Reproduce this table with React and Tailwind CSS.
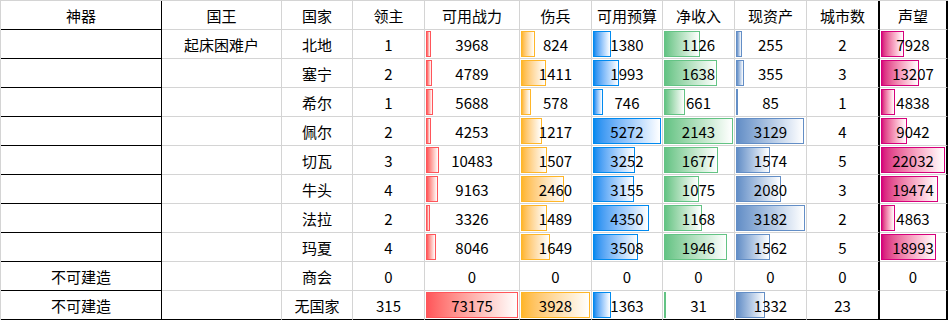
import React from 'react';

const rows = [
    { art: '', king: '起床困难户', nation: '北地', lords: 1, power: 3968, wounded: 824, budget: 1380, income: 1126, assets: 255, cities: 2, fame: 7928 },
    { art: '', king: '', nation: '塞宁', lords: 2, power: 4789, wounded: 1411, budget: 1993, income: 1638, assets: 355, cities: 3, fame: 13207 },
    { art: '', king: '', nation: '希尔', lords: 1, power: 5688, wounded: 578, budget: 746, income: 661, assets: 85, cities: 1, fame: 4838 },
    { art: '', king: '', nation: '佩尔', lords: 2, power: 4253, wounded: 1217, budget: 5272, income: 2143, assets: 3129, cities: 4, fame: 9042 },
    { art: '', king: '', nation: '切瓦', lords: 3, power: 10483, wounded: 1507, budget: 3252, income: 1677, assets: 1574, cities: 5, fame: 22032 },
    { art: '', king: '', nation: '牛头', lords: 4, power: 9163, wounded: 2460, budget: 3155, income: 1075, assets: 2080, cities: 3, fame: 19474 },
    { art: '', king: '', nation: '法拉', lords: 2, power: 3326, wounded: 1489, budget: 4350, income: 1168, assets: 3182, cities: 2, fame: 4863 },
    { art: '', king: '', nation: '玛夏', lords: 4, power: 8046, wounded: 1649, budget: 3508, income: 1946, assets: 1562, cities: 5, fame: 18993 },
    { art: '不可建造', king: '', nation: '商会', lords: 0, power: 0, wounded: 0, budget: 0, income: 0, assets: 0, cities: 0, fame: 0 },
    { art: '不可建造', king: '', nation: '无国家', lords: 315, power: 73175, wounded: 3928, budget: 1363, income: 31, assets: 1332, cities: 23, fame: null },
];

// width = cell width incl. right border
const columns = [
    { key: 'art', title: '神器', width: 161 },
    { key: 'king', title: '国王', width: 120 },
    { key: 'nation', title: '国家', width: 71 },
    { key: 'lords', title: '领主', width: 72 },
    { key: 'power', title: '可用战力', width: 95, bar: 'bg-linear-to-r from-[#ff555a] to-white border-[#ff555a]' },
    { key: 'wounded', title: '伤兵', width: 72, bar: 'bg-linear-to-r from-[#ffb628] to-white border-[#ffb628]' },
    { key: 'budget', title: '可用预算', width: 71, bar: 'bg-linear-to-r from-[#008aef] to-white border-[#008aef]' },
    { key: 'income', title: '净收入', width: 72, bar: 'bg-linear-to-r from-[#63c384] to-white border-[#63c384]' },
    { key: 'assets', title: '现资产', width: 72, bar: 'bg-linear-to-r from-[#638ec6] to-white border-[#638ec6]' },
    { key: 'cities', title: '城市数', width: 73 },
    { key: 'fame', title: '声望', width: 68, bar: 'bg-linear-to-r from-[#d6007b] to-white border-[#d6007b]' },
];

const maxOf = (key) => Math.max(...rows.map((r) => r[key] || 0));

function cellBorder(i, last) {
    let cls = 'border-b border-r border-[#d4d4d4]';
    if (i === 0) cls = 'border-b border-r border-black';
    if (i === 9) cls = 'border-b border-[#d4d4d4] border-r-2 border-r-black';
    if (i === 10) cls = 'border-b border-[#d4d4d4] border-r-2 border-r-black';
    if (last) cls += ' border-b-2 border-b-black';
    return cls;
}

function Cell({ col, i, value, last }) {
    const max = col.bar ? maxOf(col.key) : 0;
    const inner = col.width - (i >= 9 ? 2 : 1) - 2;
    let barW = 0;
    if (col.bar && value) barW = Math.max(2, Math.round((value / max) * inner));

    return (
        <div className={`grid h-full p-px ${cellBorder(i, last)}`} style={{ width: col.width }}>
            {barW > 0 && (
                <div
                    className={`col-start-1 row-start-1 self-stretch justify-self-start border ${col.bar}`}
                    style={{ width: barW }}
                />
            )}
            <div className="col-start-1 row-start-1 self-center justify-self-center whitespace-nowrap">
                {value === null ? '' : value}
            </div>
        </div>
    );
}

export default function App() {
    return (
        <div className="w-[951px] h-[320px] overflow-hidden bg-white text-black text-[15px] leading-none font-['Noto_Sans_CJK_SC',sans-serif]">
            <div className="flex flex-col border-t border-l border-[#d4d4d4] w-fit">
                <div className="flex h-[29px]">
                    {columns.map((col, i) => (
                        <div
                            key={col.key}
                            className={`flex items-center justify-center ${cellBorder(i, false)}`}
                            style={{ width: col.width }}
                        >
                            {col.title}
                        </div>
                    ))}
                </div>
                {rows.map((row, r) => (
                    <div key={r} className={`flex ${r === rows.length - 1 ? 'h-[30px]' : 'h-[29px]'}`}>
                        {columns.map((col, i) => (
                            <Cell key={col.key} col={col} i={i} value={row[col.key]} last={r === rows.length - 1} />
                        ))}
                    </div>
                ))}
            </div>
        </div>
    );
}
